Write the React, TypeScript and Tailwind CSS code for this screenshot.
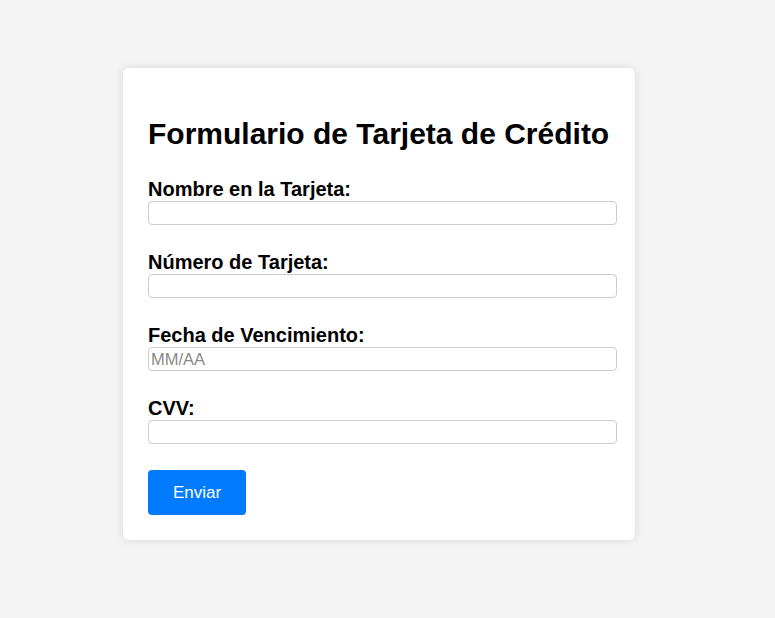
export default function App() {
  const fields = [
    { id: 'nombre', label: 'Nombre en la Tarjeta:', placeholder: '' },
    { id: 'numero', label: 'Número de Tarjeta:', placeholder: '' },
    { id: 'fecha', label: 'Fecha de Vencimiento:', placeholder: 'MM/AA' },
    { id: 'cvv', label: 'CVV:', placeholder: '' },
  ];

  return (
    <div className="min-h-[618px] bg-[#f4f4f4] pt-[68px] font-['Liberation_Sans',Arial,sans-serif] text-black">
      <div className="ml-[123px] w-[512px] rounded-[6px] bg-white px-[25px] pt-[25px] pb-[25px] shadow-[0_0_10px_rgba(0,0,0,0.12)]">
        <h1 className="mt-[24px] mb-[27px] text-[30px] leading-[34px] font-bold">
          Formulario de Tarjeta de Crédito
        </h1>
        <form onSubmit={(e) => e.preventDefault()} className="flex flex-col">
          {fields.map((f) => (
            <div key={f.id} className="mb-[26px] flex flex-col">
              <label htmlFor={f.id} className="text-[20px] leading-[23px] font-bold">
                {f.label}
              </label>
              <input
                id={f.id}
                type="text"
                placeholder={f.placeholder}
                className="h-[24px] w-[469px] rounded-[4px] border border-[#cccccc] px-[2px] text-[16.5px] placeholder-[#8a8a8a] outline-none"
              />
            </div>
          ))}
          <button
            type="submit"
            className="h-[45px] w-[98px] cursor-pointer rounded-[4px] bg-[#007bff] text-[17px] text-white"
          >
            Enviar
          </button>
        </form>
      </div>
    </div>
  );
}
